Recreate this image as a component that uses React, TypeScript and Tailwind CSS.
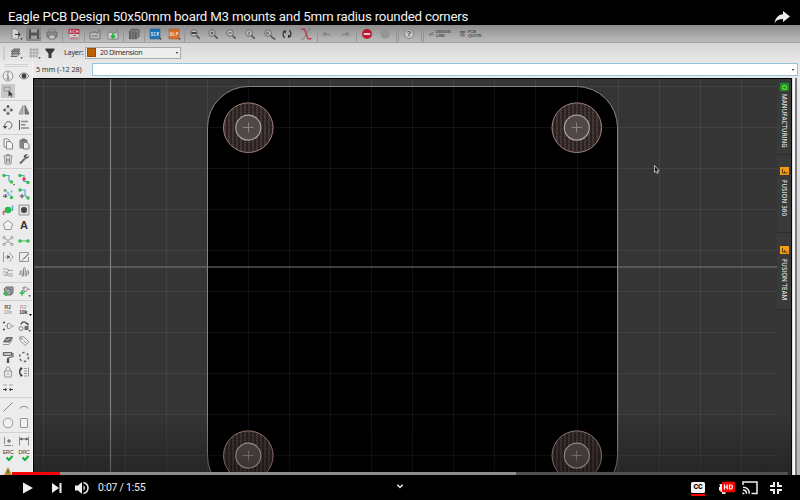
import React from "react";

type P = { children?: React.ReactNode; s?: string; c?: string };

const Ic = ({ children, s = "#555", c = "" }: P) => (
  <svg viewBox="0 0 14 14" className={"h-[14px] w-[14px] shrink-0 opacity-85 " + c} fill="none" stroke={s} strokeWidth="1">
    {children}
  </svg>
);

const Drop = () => <path d="M11.4 11.2h2.4l-1.2 1.8z" fill="#222" stroke="none" />;

const Lens = ({ children }: P) => (
  <Ic s="#606060">
    <circle cx="6" cy="6" r="3.3" fill="#c4c4c4" />
    <path d="M8.5 8.5l3.2 3.2" strokeWidth="1.6" stroke="#444" />
    {children}
  </Ic>
);

const Sep = ({ c }: { c: string }) => <div className={"h-full w-px shrink-0 bg-[#969696] " + c} />;
const Cell = ({ w, children }: { w: string; children: React.ReactNode }) => (
  <div className={"flex h-full shrink-0 items-center " + w}>{children}</div>
);

const TopBar = () => (
  <div className="flex h-[18px] items-center border-b border-[#a2a2a2] bg-gradient-to-b from-[#8d8d8d] to-[#bcbcbc] pl-[9px]">
    <Cell w="w-[18px]">
      <Ic><path d="M3 2h4l2.5 2.5V12H3z" fill="#ddd" stroke="#777" strokeWidth=".7" /><path d="M6 7.5h5M9 5.5l2.3 2L9 9.5" stroke="#222" /><Drop /></Ic>
    </Cell>
    <Cell w="w-[18px]">
      <div className="-ml-px flex h-[15px] w-[15px] items-center justify-center bg-[#888]">
        <Ic><path d="M2 2h9l1 1v9H2z" fill="#4b4b4b" stroke="none" /><path d="M4 2h6v3.5H4zM4 8.500h6V12H4z" fill="#a5a5a5" stroke="none" /></Ic>
      </div>
    </Cell>
    <Cell w="w-[17px]">
      <Ic><path d="M4 5V2h6v3" stroke="#777" /><path d="M2 5h10v5H2z" fill="#8b8b8b" stroke="#555" strokeWidth=".8" /><path d="M4 8h6v4H4z" fill="#ccc" strokeWidth=".8" /></Ic>
    </Cell>
    <Sep c="mr-1" />
    <Cell w="w-[17px]">
      <Ic><path d="M2 2h10v10H2z" fill="#d4d4d4" stroke="#888" strokeWidth=".6" /><path d="M1.5 2h11v5h-11z" fill="#bd1938" stroke="none" /><path d="M4.400 3.500H3v1h1.200v1.200H2.700M7.700 3.500H6v2.200h1.700M9.200 3.300v2.600M11 3.300v2.600M9.200 4.500H11" stroke="#fff" strokeWidth=".6" /><path d="M3 11h8M6 8.500h3" stroke="#c34259" /></Ic>
    </Cell>
    <Sep c="mr-[3px]" />
    <Cell w="w-[18px]">
      <Ic s="#6b6b6b"><path d="M2 12V6l3-1.500V6l3-1.500V6h2.500V3H12v9z" fill="#bdbdbd" /><path d="M4 9h6" /></Ic>
    </Cell>
    <Cell w="w-[17px]">
      <Ic s="#777"><path d="M2 12V6l3-1.500V6l3-1.500V6h2.500V3H12v9z" fill="#ddd" /><path d="M7 6v4.500M4.800 8.700L7 11l2.200-2.300" stroke="#10b52c" strokeWidth="1.700" /></Ic>
    </Cell>
    <Sep c="mr-[3px]" />
    <Cell w="w-[17px]">
      <Ic s="#333"><path d="M2.500 4.500l2-2.300H12v7l-2.500 2.500h-7z" fill="#777" strokeWidth=".7" /><path d="M2.500 4.500h7v7h-7z" fill="#555" stroke="none" /><path d="M4.500 4.500v7M7 4.500v7M9.500 4.500l2.300-2.200" stroke="#aaa" strokeWidth=".5" /></Ic>
    </Cell>
    <Sep c="mr-[3px]" />
    <Cell w="w-[19px]">
      <Ic><path d="M2 2h10v10H2z" fill="#086dba" stroke="#1a5685" strokeWidth=".6" /><path d="M5 5.500H3.300V7h1.400v1.500H3M7.900 5.500H6.200v3h1.700M9.200 8.800V5.500h1.400V7H9.200l1.600 1.700" stroke="#fff" strokeWidth=".7" /><Drop /></Ic>
    </Cell>
    <Cell w="w-[17px]">
      <Ic><path d="M2 2h10v10H2z" fill="#dd651a" stroke="#a75828" strokeWidth=".6" /><path d="M3.200 5.200v3.300h1.500V5.200M6.200 5.200v3.300h1.500M9.200 8.800V5.500h1.500V7H9.200" stroke="#fff" strokeWidth=".7" /><Drop /></Ic>
    </Cell>
    <Sep c="mr-[3px]" />
    <Cell w="w-[18px]"><Lens><path d="M3.500 5h5v2h-5z" fill="#333" stroke="none" /></Lens></Cell>
    <Cell w="w-[18px]"><Lens><path d="M4.500 6h3M6 4.500v3" stroke="#333" /></Lens></Cell>
    <Cell w="w-[19px]"><Lens><path d="M4.500 6h3" stroke="#333" /></Lens></Cell>
    <Cell w="w-[19px]"><Lens><path d="M5 5.200h2L5 7h2" stroke="#555" strokeWidth=".7" /></Lens></Cell>
    <Cell w="w-[18px]"><Lens><path d="M4 4.500h3v3H4z" fill="#777" stroke="none" /><Drop /></Lens></Cell>
    <Cell w="w-[19px]">
      <Ic s="#242424"><path d="M4.800 10.800C2.500 9 2.500 6 4.600 4.300M9.200 3.200c2.300 1.800 2.300 4.800.2 6.500" strokeWidth="1.300" /><path d="M2.500 4.200L6 3v3.500zM11.500 9.800L8 11V7.500z" fill="#242424" stroke="none" /></Ic>
    </Cell>
    <Cell w="w-[18px]">
      <Ic><path d="M2 12h2.500L10 2h2.500" stroke="#777" /><path d="M2 2.200h3.500L9 11.800h3.500" stroke="#c52b43" strokeWidth="1.500" /></Ic>
    </Cell>
    <Sep c="mr-[2px]" />
    <Cell w="w-[18px]"><Ic><path d="M2 7l4-3v2c3 0 5 1.200 6 4-2-1.800-4-2-6-2v2z" fill="#868686" stroke="none" /></Ic></Cell>
    <Cell w="w-[18px]"><Ic><path d="M12 7L8 4v2c-3 0-5 1.200-6 4 2-1.800 4-2 6-2v2z" fill="#868686" stroke="none" /></Ic></Cell>
    <Sep c="mr-[3px]" />
    <Cell w="w-[19px]"><Ic><circle cx="7" cy="7" r="5" fill="#c6001f" stroke="none" /><path d="M3.800 7h6.400" stroke="#eee" strokeWidth="1.800" /></Ic></Cell>
    <Cell w="w-[17px]"><Ic><circle cx="6" cy="7" r="4.600" fill="#939393" stroke="none" /></Ic></Cell>
    <Sep c="mr-px" />
    <Sep c="mr-[3px]" />
    <Cell w="w-[19px]">
      <div className="ml-[2px] flex h-[10px] w-[10px] items-center justify-center rounded-full border border-[#888] bg-[#c7c7c7] font-['Liberation_Sans'] text-[8px] leading-none font-bold text-[#444]">?</div>
    </Cell>
    <Sep c="mr-px" />
    <Sep c="mr-[4px]" />
    <Cell w="w-[31px]">
      <svg viewBox="0 0 8 8" className="mr-px h-[8px] w-[7px]" fill="none" stroke="#666"><path d="M3 4.500L5.500 2l1.300 1.300L4.500 5.500M5 3.800L2.500 6.300 1.200 5 3.500 2.700" strokeWidth=".8" /></svg>
      <div className="font-['Liberation_Sans'] text-[4px] font-bold tracking-[-.15px] text-[#505050]">
        <div className="h-[4px] leading-[4px]">DESIGN</div>
        <div className="h-[4px] leading-[4px]">LINK</div>
      </div>
    </Cell>
    <Cell w="w-[30px]">
      <svg viewBox="0 0 8 8" className="mr-[2px] h-[8px] w-[7px]" stroke="#666"><path d="M1 1.500h6" strokeWidth="2" /><path d="M1 4h6M1 6h6M3 2v5M5 2v5" strokeWidth=".7" /></svg>
      <div className="font-['Liberation_Sans'] text-[4px] font-bold tracking-[-.15px] text-[#505050]">
        <div className="h-[4px] leading-[4px]">PCB</div>
        <div className="h-[4px] leading-[4px]">QUOTE</div>
      </div>
    </Cell>
  </div>
);

const LayerBar = () => (
  <div className="flex h-[19px] items-center bg-gradient-to-b from-[#d6d6d6] to-[#e8e8e8] pl-[3px] font-['Noto_Sans'] text-[7.200px] tracking-[-.35px] text-[#333]">
    <div className="mr-[4px] h-[14px] w-[2px] bg-[#ccc]" />
    <Cell w="w-[18px]"><Ic s="#555"><path d="M2 10.500L5 7.500h6L8 10.500z" fill="#bbb" /><path d="M2 8l3-3h6L8 8z" fill="#888" /><path d="M2 5.500L5 3h6L8 5.500z" fill="#777" /><Drop /></Ic></Cell>
    <Cell w="w-[16px]"><Ic s="#999"><path d="M4 2v10M7 2v10M10 2v10M2 4h10M2 7h10M2 10h8" /><Drop /></Ic></Cell>
    <Cell w="w-[21px]"><Ic><path d="M2.500 2.500h9v1.500L8.500 7.500V12h-3V7.500L2.500 4z" fill="#1d1d1d" stroke="none" /></Ic></Cell>
    <div className="w-[21px] tracking-[-.2px]">Layer:</div>
    <div className="flex h-[12px] w-[96px] items-center border border-[#aaa] bg-[#ededed] pr-[2px] pl-[1px]">
      <div className="mr-[4px] h-[9px] w-[9px] border border-[#945000] bg-[#bd6100]" />
      <div className="grow whitespace-nowrap">20 Dimension</div>
      <div className="h-0 w-0 border-x-[1.500px] border-t-[2px] border-x-transparent border-t-[#222]" />
    </div>
  </div>
);

const Row = ({ children }: P) => (
  <div className="flex h-[15.650px] shrink-0 items-center gap-[2px] pl-px">{children}</div>
);
const Group = ({ h, children }: { h: string; children: React.ReactNode }) => (
  <div className={"flex shrink-0 flex-col justify-center border-b border-[#d2d2d2] " + h}>{children}</div>
);
const Dot = ({ x, y, c = "#16b52c", r = 1.4 }: { x: number; y: number; c?: string; r?: number }) => (
  <circle cx={x} cy={y} r={r} fill={c} stroke="none" />
);
const Tiny = ({ a, b }: { a: string; b: string }) => (
  <div className="w-[14px] text-center font-['Liberation_Sans'] text-[5px] leading-[5px] font-bold">
    <div className={a}>R2</div>
    <div className={b}>10k</div>
  </div>
);
const Check = ({ t }: { t: string }) => (
  <div className="relative h-[14px] w-[14px] text-center font-['Liberation_Sans'] text-[5.500px] leading-[7px] tracking-[-.3px] text-[#444]">
    {t}
    <svg viewBox="0 0 14 14" className="absolute inset-0 h-[14px] w-[14px]" fill="none" stroke="#0db339" strokeWidth="1.900"><path d="M5.500 8.500L8 11l3.500-4" /></svg>
  </div>
);

const Palette = () => (
  <div className="flex h-[413px] w-[33px] shrink-0 flex-col overflow-hidden border-r border-[#f7f7f7] bg-[#ececec]">
    <div className="mx-[4px] mt-[2px] h-[3px] shrink-0 border-y border-[#d2d2d2]" />
    <Group h="h-[34px]">
      <Row>
        <Ic><circle cx="7" cy="7" r="5" stroke="#888" /><path d="M6 6h1v4M5.500 10h3" stroke="#555" /><Dot x={7} y={4} c="#555" r={0.8} /></Ic>
        <Ic><path d="M2 7c2.500-4 7.500-4 10 0-2.500 4-7.500 4-10 0z" fill="#ddd" stroke="#777" /><Dot x={7} y={7} c="#222" r={2.4} /></Ic>
      </Row>
      <Row>
        <div className="h-[14px] w-[14px] bg-[#cacaca]"><Ic><path d="M3 3h6v4H3z" stroke="#888" /><path d="M7.500 6.500v6l1.600-1.500 1.500 2 .8-.7-1.200-1.800h1.800z" fill="#222" stroke="none" /></Ic></div>
      </Row>
    </Group>
    <Group h="h-[34px]">
      <Row>
        <Ic><path d="M7 3v2.500M7 8.500V11M3 7h2.500M8.500 7H11" /><path d="M7 1.800L9 4.300H5zM7 12.200L9 9.700H5zM1.800 7L4.300 5v4zM12.200 7L9.700 5v4z" fill="#333" stroke="none" /></Ic>
        <Ic><path d="M6 2.500V11H2z" fill="#aaa" stroke="#888" /><path d="M8 2.500V11h4z" fill="#666" stroke="#555" /></Ic>
      </Row>
      <Row>
        <Ic><path d="M4 9.500C2.800 5.500 6 2.500 9 4c3.500 2 2 6.500-1.500 7" /><path d="M1.800 8h4.500L4 11z" fill="#333" stroke="none" /></Ic>
        <Ic s="#777"><path d="M2.500 2v10" stroke="#333" /><path d="M4 3.500h7M4 6.800h4.500M4 10h8" strokeWidth="1.500" /></Ic>
      </Row>
    </Group>
    <Group h="h-[34px]">
      <Row>
        <Ic s="#777"><path d="M3 2h4l2 2v6H3z" fill="#f5f5f5" /><path d="M5.500 4.500h3.500l2.500 2V12h-6z" fill="#f5f5f5" /></Ic>
        <Ic s="#666"><path d="M3 3h7v8H3z" fill="#777" /><path d="M5 2h3v2H5z" fill="#555" /><path d="M6.500 5.500H10l2 2V12H6.500z" fill="#eee" /></Ic>
      </Row>
      <Row>
        <Ic s="#777"><path d="M3.500 4.500l.6 7.500h5.800l.6-7.500M2.500 4h9M5.500 4V2.500h3V4M5.500 6v4.500M7 6v4.500M8.500 6v4.500" /></Ic>
        <Ic><path d="M3 11.500L8 6.500" strokeWidth="2" /><path d="M10.800 2.500L9 4.300l1 1L11.800 3.500c.7 2.500-1.800 4-3.500 3L6.800 5c-.5-1.800 1.500-3.500 4-2.500z" fill="#444" stroke="none" /></Ic>
      </Row>
    </Group>
    <Group h="h-[114px]">
      <Row>
        <Ic s="#3b9bd1"><path d="M3 3.500h5v5.500l2 1" strokeWidth="1.200" /><Dot x={3} y={3.5} r={1.700} /><Dot x={10.500} y={10} r={1.700} /><path d="M12 12h2l-1 1.500z" fill="#222" stroke="none" /></Ic>
        <Ic s="#3b9bd1"><path d="M3 3.500h4v6h4" strokeWidth="1.200" /><Dot x={3} y={3.500} r={1.700} /><Dot x={11} y={10.500} r={1.700} /><path d="M5.500 5.500h3v3h-3z" fill="#e31334" stroke="none" /></Ic>
      </Row>
      <Row>
        <Ic s="#5aa9d3"><path d="M5 3l3 6M7 5l4 5" /><Dot x={4} y={3.5} c="#60a040" /><Dot x={10.500} y={4.500} c="#3a9" r={1} /><Dot x={10.500} y={10.500} r={1.700} /><path d="M4.500 7v4.500M2.200 9.200h4.600" stroke="#444" strokeDasharray="1.500 .7" strokeWidth="1.500" /></Ic>
        <Ic s="#3b9bd1"><path d="M3 3h5v5l3 3" strokeWidth="1.200" /><Dot x={3} y={3} r={1.700} /><Dot x={11} y={11} r={1.700} /><path d="M5 7v4.500M2.700 9.200h4.600" stroke="#555" strokeWidth="1.300" /></Ic>
      </Row>
      <Row>
        <Ic><path d="M2.500 12V8.500H6" stroke="#c33b4d" strokeWidth="1.500" /><path d="M8 7h3.500V2.500" stroke="#3b9bd1" strokeWidth="1.500" /><Dot x={7} y={7} r={3.300} c="#08b52c" /></Ic>
        <Ic><path d="M2 2h10v10H2z" fill="#ddd" stroke="#888" /><Dot x={7} y={7} r={3} c="#292929" /></Ic>
      </Row>
      <Row>
        <Ic s="#888"><path d="M7 2.500l4.700 3.500L10 11.500H4L2.300 6z" fill="#f2f2f2" /></Ic>
        <div className="w-[14px] text-center font-['Liberation_Sans'] text-[11px] leading-none font-bold text-[#333]">A</div>
      </Row>
      <Row>
        <Ic s="#888"><path d="M3.500 4l2 2h3l2-2M3.500 10l2-2h3l2 2" /><circle cx="3" cy="3.500" r="1.100" /><circle cx="11" cy="3.500" r="1.100" /><circle cx="3" cy="10.500" r="1.100" /><circle cx="11" cy="10.500" r="1.100" /></Ic>
        <Ic s="#20bc45"><path d="M3 7h8" /><Dot x={3} y={7} r={1.700} /><Dot x={11} y={7} r={1.700} /></Ic>
      </Row>
      <Row>
        <Ic s="#888"><path d="M2.500 2v10M9 2.500c-.5 3 3 3 3 4.500s-3.500 2-3 4.500" /><path d="M4 7h5M6.500 5.300L9 7 6.500 8.700z" fill="#444" stroke="#444" strokeWidth=".5" /></Ic>
        <Ic s="#888"><path d="M11.500 7v4.500h-9v-9h9V4L4 11.500" /><path d="M11.500 4l-5 5" stroke="#555" /></Ic>
      </Row>
      <Row>
        <Ic s="#999"><path d="M2 4h4l2 1.500h4M2 7h3l2 2h5M2 10h4l1.500 1H12M5 11l3-7" /></Ic>
        <Ic s="#777"><path d="M2 9.500h1.200V7c0-2 1.800-2 1.800 0v3c0 1.800 1.500 1.800 1.500 0V4c0-2 1.700-2 1.700 0v6c0 1.500 1.600 1.500 1.600 0V6.500c0-1.500 1.700-1.500 1.700 0v3" /></Ic>
      </Row>
    </Group>
    <Group h="h-[18px]">
      <Row>
        <Ic s="#555"><path d="M3 5l2-2h7v6l-2 2H5z" fill="#999" /><path d="M5 5h5v6" /><path d="M4.500 7v5M2 9.500h5" stroke="#00b62b" strokeWidth="1.700" /></Ic>
        <Ic s="#777"><path d="M7 3h1.500c2 0 2.500 4.500 0 4.500H7zM5 4h2M5 6.500h2M10.500 5.200H13" /><path d="M5 6.500v5M2.500 9h5" stroke="#00b62b" strokeWidth="1.600" /><Drop /></Ic>
      </Row>
    </Group>
    <Group h="h-[97px]">
      <Row><Tiny a="text-[#555]" b="text-[#aaa]" /><Tiny a="text-[#aaa]" b="text-[#333]" /><svg viewBox="0 0 3 3" className="mt-[11px] -ml-[3px] h-[3px] w-[3px]"><path d="M0 0h3L1.500 2z" /></svg></Row>
      <Row>
        <Ic s="#888"><path d="M6.500 4.500H8c3 0 3 5 0 5H6.500zM10.500 7H13" /><Dot x={3} y={3.5} c="#333" r={1.1} /><Dot x={3} y={10.5} c="#333" r={1.1} /><path d="M4 7h2" /></Ic>
        <Ic s="#333"><path d="M4 5.500C5 2 9 2 10 5" strokeWidth="1.300" /><circle cx="4" cy="9.500" r="2" stroke="#777" /><path d="M7.500 7h4v4h-4z" fill="#555" stroke="none" /><path d="M8 4h3.500v3z" fill="#333" stroke="none" /><Drop /></Ic>
      </Row>
      <Row>
        <Ic s="#555"><path d="M2.500 8l3-4.500h6L8.500 8z" fill="#555" /><path d="M2 10.500h6l3.500-5" stroke="#888" /><path d="M5 6.500l4-2" stroke="#ccc" /></Ic>
        <Ic s="#888"><path d="M2.500 3l4-.5L12 7.800 8.200 11.500 3 6.500z" /><circle cx="4.700" cy="4.600" r=".8" /><path d="M6.500 6.500l3 2.700" /></Ic>
      </Row>
      <Row>
        <Ic><path d="M2.500 2.500h8v3h-8z" fill="#bbb" strokeWidth="1.200" /><path d="M10.500 3.500H12v3L7 8v1" strokeWidth="1.200" /><path d="M7 8.500V13" strokeWidth="2.300" stroke="#333" /></Ic>
        <Ic s="#555"><circle cx="7" cy="7" r="4.500" strokeWidth="1.500" strokeDasharray="2.400 2.312" /></Ic>
      </Row>
      <Row>
        <Ic s="#888"><path d="M3.500 6h7v6h-7zM5 6V4c0-2.700 4-2.700 4 0v2M7 8v2" /></Ic>
        <Ic s="#888"><path d="M4.500 3C2 4.500 2 9 4.500 11" stroke="#222" strokeWidth="1.500" /><path d="M3 2.500l3 .5-2 2.500zM3 11.500l3-.5-2-2.500z" fill="#222" stroke="none" /><path d="M7 3.500h3M7 6h3M7 8.500h3M7 11h3M11.500 2.500v9" /></Ic>
      </Row>
      <Row>
        <Ic s="#999"><path d="M2 4h4M8 4h4" /><path d="M2 8.500h4M12 8.500H8" stroke="#222" /><path d="M4 6.800L6.200 8.500 4 10.200zM10 6.800L7.800 8.500 10 10.200z" fill="#222" stroke="none" /></Ic>
      </Row>
    </Group>
    <Group h="h-[35px]">
      <Row>
        <Ic s="#777"><path d="M2.500 11.500l9-9" /></Ic>
        <Ic s="#777"><path d="M2.500 8.500C4.500 5.800 9.500 5.800 11.500 8.500" /></Ic>
      </Row>
      <Row>
        <Ic s="#888"><circle cx="7" cy="7" r="4.800" fill="#f2f2f2" /></Ic>
        <Ic s="#888"><path d="M3.500 2.500h7v9h-7z" fill="#f2f2f2" /></Ic>
      </Row>
    </Group>
    <div>
      <Row>
        <Ic s="#777"><path d="M3.500 3v8.500H12" strokeDasharray="7 1" /><path d="M8 5v4M6 7h4" stroke="#444" /></Ic>
        <Ic s="#777"><path d="M2.500 2.500v9M11.500 2.500v9" /><path d="M3 5h8" stroke="#333" /><path d="M3 5l2-1.500v3zM11 5L9 3.500v3z" fill="#333" stroke="none" /></Ic>
      </Row>
      <Row><Check t="ERC" /><Check t="DRC" /></Row>
      <Row><Ic><path d="M7 2l5 10H2z" fill="#b88411" stroke="none" /><path d="M7 4.500v4" stroke="#332300" /></Ic></Row>
    </div>
  </div>
);

const gx = [43, 84, 125, 166, 207, 248, 289, 330, 371, 412, 453, 494, 535, 577, 618, 659, 700, 741];
const gy = [86, 127, 168, 209, 250, 291, 332, 373, 414, 455];
const holes = [[248, 128], [576.5, 128], [248, 456], [576.5, 456]];

const Board = () => (
  <svg viewBox="33 78 759 397" className="block h-[397px] w-[759px]" fill="none">
    <defs>
      <pattern id="hatch" width="4" height="4" patternUnits="userSpaceOnUse">
        <rect width="4" height="4" fill="#2a2221" />
        <path d="M1 0v4" stroke="#544442" strokeWidth="1.500" strokeDasharray="1.500 .5" />
      </pattern>
      <linearGradient id="shade" x1="0" y1="0" x2="0" y2="1">
        <stop offset="0" stopColor="#000" stopOpacity="0" />
        <stop offset="1" stopColor="#000" stopOpacity=".3" />
      </linearGradient>
    </defs>
    <rect x="33" y="78" width="759" height="397" fill="#353535" />
    <rect x="207.500" y="86.500" width="410" height="410" rx="41" fill="#000" />
    <g stroke="#fff" strokeOpacity=".065">
      {gx.map((x) => <path key={x} d={`M${x + 0.5} 78V475`} />)}
      {gy.map((y) => <path key={y} d={`M33 ${y + 0.5}H777`} />)}
    </g>
    <rect x="207.500" y="86.500" width="410" height="410" rx="41" stroke="#858585" />
    {holes.map(([x, y]) => (
      <g key={`${x}-${y}`}>
        <circle cx={x + 0.3} cy={y - 0.3} r="24.800" fill="url(#hatch)" stroke="#a2827d" />
        <circle cx={x + 0.3} cy={y - 0.3} r="12.500" fill="#504846" stroke="#aaa29c" strokeWidth="1.200" />
        <path d={`M${x - 5} ${y - 0.5}h10.500M${Math.floor(x) + 0.5} ${y - 5.5}v10`} stroke="#8b8280" />
      </g>
    ))}
    <path d="M110.500 78V475M33 267H777" stroke="#7d7d7d" strokeWidth="1.200" />
    <rect x="33" y="410" width="759" height="65" fill="url(#shade)" />
    <path d="M33.500 475V78.500H792" stroke="#000" />
    <path d="M791.500 78V475" stroke="#050505" />
    <path d="M654.500 165.500v7l1.500-1.300 1.300 2.300 1-.6-1.100-2.100h2z" fill="#111" stroke="#eee" strokeWidth=".7" />
  </svg>
);

const Tab = ({ text, h, t, green }: { text: string; h: string; t: string; green?: boolean }) => (
  <div className={"flex flex-col items-center border-b border-[#2c2c2c] bg-[#3a3a3a] " + h}>
    {green ? (
      <div className="flex h-[8px] w-[9px] shrink-0 items-center justify-center rounded-[1px] bg-[#15942f]"><div className="h-[5px] w-[5px] rounded-full border-[1.500px] border-[#b4e72b]" /></div>
    ) : (
      <svg viewBox="0 0 9 8" className="h-[8px] w-[9px] shrink-0"><path d="M0 0h9v8H0z" fill="#f19b16" /><path d="M2.500 2v4M4.500 4v2M2.500 6h5" fill="none" stroke="#633d08" /></svg>
    )}
    <div className={"font-['Open_Sans'] text-[6.200px] leading-[9px] font-semibold whitespace-nowrap text-[#dadada] [writing-mode:vertical-rl] " + t}>{text}</div>
  </div>
);

const Controls = () => (
  <div className="flex h-[25px] items-center bg-black pr-[18px] pl-[21px] font-['Roboto'] text-[10.500px] text-[#eee]">
    <svg viewBox="0 0 14 14" className="mr-[15px] h-[14px] w-[14px]"><path d="M2 1.500v11L12 7z" fill="#eee" /></svg>
    <svg viewBox="0 0 14 14" className="mr-[10px] h-[14px] w-[14px]"><path d="M2 2v10l7-5zM9.500 2h2v10h-2z" fill="#eee" /></svg>
    <svg viewBox="0 0 16 14" className="mr-[8px] h-[14px] w-[16px]" fill="none" stroke="#eee" strokeWidth="1.500"><path d="M1 4.500h3L8 1v12L4 9.500H1z" fill="#eee" stroke="none" /><path d="M9.500 4.300c1.800.8 1.800 4.600 0 5.400z" fill="#eee" stroke="none" /><path d="M9.500 1.500c6 1.700 6 9.300 0 11" /></svg>
    <div className="w-[60px] tracking-[-.25px] whitespace-nowrap">0:07 / 1:55</div>
    <svg viewBox="0 0 8 8" className="mb-[4px] ml-[238px] h-[8px] w-[8px]" fill="none" stroke="#eee" strokeWidth="1.400"><path d="M1.300 2.800L4 5.500l2.700-2.700" /></svg>
    <div className="grow" />
    <div className="mr-[13px] mt-[2px] flex flex-col items-center gap-px">
      <div className="flex h-[11px] w-[14px] items-center justify-center rounded-[1.500px] bg-[#f4f4f4] font-['Roboto'] text-[7px] leading-none font-black text-black">CC</div>
      <div className="h-[2px] w-[14px] bg-[#f00]" />
    </div>
    <div className="mr-[7px] flex h-[14px] w-[17px] items-start">
      <svg viewBox="0 0 17 14" className="h-[14px] w-[17px]"><path d="M1.500 3h6v10H4v-2H2.500V9.500H1V6h1z" fill="#eee" /><rect x="4" y=".8" width="13" height="10.500" rx="1" fill="#f00" /><path d="M6.500 3.500v5M9.200 3.500v5M6.500 6h2.700M11.500 4v4h1.300c2 0 2-4 0-4z" fill="none" stroke="#fff" strokeWidth="1.200" /></svg>
    </div>
    <svg viewBox="0 0 16 14" className="mr-[12px] h-[14px] w-[16px]" fill="none" stroke="#eee" strokeWidth="1.500"><path d="M1 4V1h14v11.500H9.500M1 6.200c4 0 6.300 2.800 6.300 6.500M1 9c2 0 3.500 1.500 3.500 3.700" /><path d="M.5 11.200v2h2c0-1.200-.8-2-2-2z" fill="#eee" stroke="none" /></svg>
    <svg viewBox="0 0 12 12" className="h-[12px] w-[12px]" fill="none" stroke="#eee" strokeWidth="1.900"><path d="M0 4h4V0M8 0v4h4M0 8h4v4M8 12V8h4" /></svg>
  </div>
);

export default function App() {
  return (
    <div className="flex h-[500px] w-[800px] flex-col overflow-hidden bg-black">
      <div className="flex h-[25px] items-center justify-between pt-[9px] pr-[10px] pl-[8px] font-['Roboto'] text-[13.300px] leading-[18px] text-[#f1f1f1]">
        <div className="tracking-[-.22px] whitespace-nowrap">Eagle PCB Design 50x50mm board M3 mounts and 5mm radius rounded corners</div>
        <svg viewBox="0 0 16 14" className="h-[14px] w-[16px]"><path d="M9 1l7 5.500L9 12V9c-4 0-6.500 1-8.500 4C1.500 8 4 4.800 9 4.300z" fill="#eee" /></svg>
      </div>
      <TopBar />
      <LayerBar />
      <div className="relative flex h-[413px]">
        <Palette />
        <div className="flex w-[767px] flex-col">
          <div className="flex h-[16px] items-start bg-[#e8e8e8] pt-px pr-[2px] pl-[3px] font-['Noto_Sans'] text-[7.300px] leading-[13px] text-[#333]">
            <div className="w-[56px] tracking-[-.1px] whitespace-nowrap">5 mm (-12 28)</div>
            <div className="flex h-[13px] grow items-center justify-end border border-[#93c5dc] bg-white pr-[3px]">
              <div className="h-0 w-0 border-x-[1.500px] border-t-[2px] border-x-transparent border-t-[#222]" />
            </div>
          </div>
          <div className="flex h-[397px]">
            <Board />
            <div className="flex w-[8px] shrink-0">
              <div className="w-[1px] bg-[#ddd]" />
              <div className="w-[2px] bg-[#f7f7f7]" />
              <div className="w-[2px] bg-[#777]" />
              <div className="w-[3px] bg-gradient-to-b from-[#e9e9e9] to-[#b5b5b5]" />
            </div>
          </div>
        </div>
        <div className="absolute top-[17px] left-[777px] flex w-[14px] flex-col">
          <Tab text="MANUFACTURING" h="h-[76px] pt-[4px]" t="mt-[3px]" green />
          <Tab text="FUSION 360" h="h-[78px] pt-[12px]" t="mt-[5px] tracking-[.1px]" />
          <Tab text="FUSION TEAM" h="h-[77px] pt-[13px]" t="mt-[5px]" />
        </div>
        <div className="absolute bottom-0 left-[12px] flex h-[3px] w-[776px] bg-[#505050]">
          <div className="w-[48px] bg-[#f00]" />
          <div className="w-[456px] bg-[#8e8e8e]" />
        </div>
      </div>
      <Controls />
    </div>
  );
}
